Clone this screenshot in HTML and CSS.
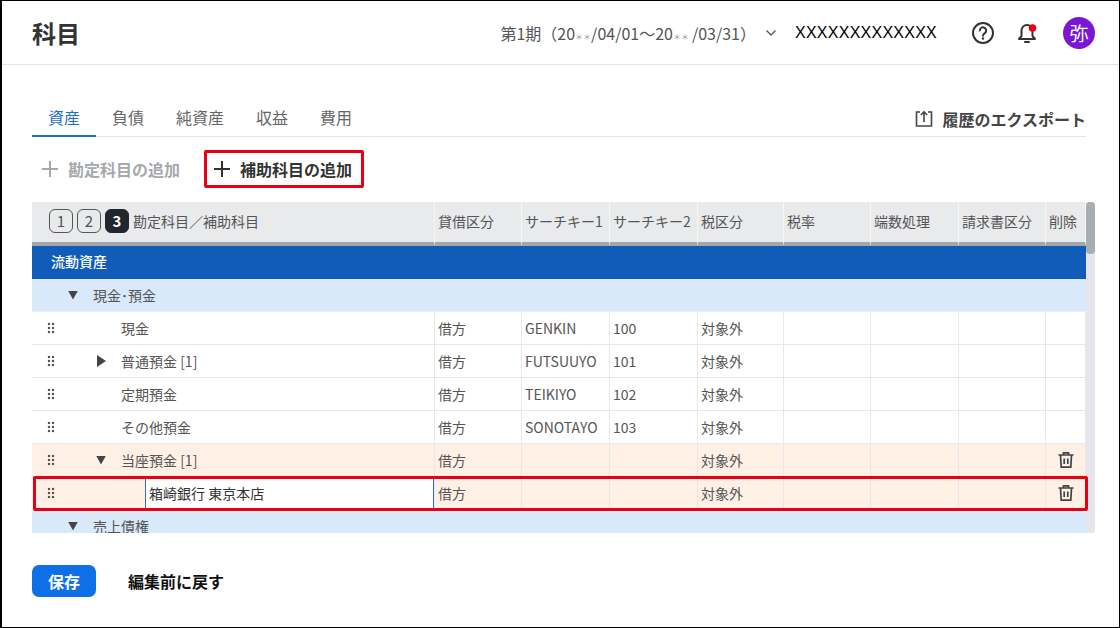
FILE: index.html
```html
<!DOCTYPE html>
<html lang="en">
  <head>
    <meta charset="utf-8" />
    <meta name="viewport" content="width=device-width, initial-scale=1" />
    <title>科目</title>
    <link rel="stylesheet" href="styles.css">
  </head>
  <body>
    <div class="page">
      <header class="topbar">
        <h1>科目</h1>
        <div class="period">第1期（20<span class="mask">＊＊</span>/04/01〜20<span class="mask gap">＊＊</span>/03/31）</div>
        <svg class="chevron" width="12" height="8" viewBox="0 0 12 8"><path d="M1.500 1.500 6 6l4.500-4.500" fill="none" stroke="#555" stroke-width="1.300"/></svg>
        <div class="company">XXXXXXXXXXXXX</div>
        <svg class="icon-help" width="24" height="24" viewBox="0 0 24 24" fill="none" stroke="#333" stroke-width="2"><circle cx="12" cy="12" r="10"/><path d="M8.800 9.500a3.200 3.200 0 1 1 4.800 2.800c-1 .6-1.600 1.200-1.600 2.400" stroke-linecap="round"/><circle cx="12" cy="17.500" r="1.200" fill="#333" stroke="none"/></svg>
        <svg class="icon-bell" width="24" height="26" viewBox="0 0 24 26" fill="none" stroke="#333" stroke-width="2"><path d="M4 19h16l-2.500-3v-5.500a5.500 5.500 0 0 0-11 0V16z" stroke-linejoin="round"/><path d="M10 22h4" stroke-linecap="round"/><circle cx="17.500" cy="8" r="3.800" fill="#e60012" stroke="none"/></svg>
        <div class="avatar">弥</div>
      </header>

      <main class="content">
        <div class="tabs">
          <div class="tab active">資産</div>
          <div class="tab">負債</div>
          <div class="tab">純資産</div>
          <div class="tab">収益</div>
          <div class="tab">費用</div>
          <div class="export">
            <svg width="20" height="20" viewBox="0 0 20 20" fill="none" stroke="#444" stroke-width="1.600"><path d="M6 3H2.500v14h15V3H14"/><path d="M10 13V3M6.800 6 10 2.800 13.200 6"/></svg>
            履歴のエクスポート
          </div>
        </div>

        <div class="actions">
          <div class="add-btn disabled"><span class="plus"></span>勘定科目の追加</div>
          <div class="add-btn marked"><span class="plus"></span>補助科目の追加</div>
        </div>

        <div class="table-wrap">
          <div class="table-scroll">
            <table class="table">
              <colgroup>
                <col class="col-name" /><col class="col-a" /><col class="col-b" /><col class="col-b" /><col class="col-c" /><col class="col-a" /><col class="col-b" /><col class="col-a" /><col />
              </colgroup>
              <thead>
                <tr>
                  <th>
                    <div class="levels">
                      <span class="level">1</span><span class="level">2</span><span class="level on">3</span>
                      <span class="level-title">勘定科目／補助科目</span>
                    </div>
                  </th>
                  <th>貸借区分</th>
                  <th>サーチキー1</th>
                  <th>サーチキー2</th>
                  <th>税区分</th>
                  <th>税率</th>
                  <th>端数処理</th>
                  <th>請求書区分</th>
                  <th>削除</th>
                </tr>
              </thead>
              <tbody>
                <tr class="row-section"><td colspan="9"><span class="section-name">流動資産</span></td></tr>
                <tr class="row-group"><td colspan="9"><div class="name lv-group"><span class="tri down"></span>現金･預金</div></td></tr>
                <tr>
                  <td><div class="name"><span class="grip"></span><span class="tri none"></span>現金</div></td>
                  <td>借方</td><td>GENKIN</td><td>100</td><td>対象外</td><td></td><td></td><td></td><td></td>
                </tr>
                <tr>
                  <td><div class="name"><span class="grip"></span><span class="tri right"></span>普通預金 [1]</div></td>
                  <td>借方</td><td>FUTSUUYO</td><td>101</td><td>対象外</td><td></td><td></td><td></td><td></td>
                </tr>
                <tr>
                  <td><div class="name"><span class="grip"></span><span class="tri none"></span>定期預金</div></td>
                  <td>借方</td><td>TEIKIYO</td><td>102</td><td>対象外</td><td></td><td></td><td></td><td></td>
                </tr>
                <tr>
                  <td><div class="name"><span class="grip"></span><span class="tri none"></span>その他預金</div></td>
                  <td>借方</td><td>SONOTAYO</td><td>103</td><td>対象外</td><td></td><td></td><td></td><td></td>
                </tr>
                <tr class="row-edit">
                  <td><div class="name"><span class="grip"></span><span class="tri down"></span>当座預金 [1]</div></td>
                  <td>借方</td><td></td><td></td><td>対象外</td><td></td><td></td><td></td>
                  <td class="cell-trash"><svg class="trash" width="18" height="18" viewBox="0 0 18 18" fill="none" stroke="#444" stroke-width="1.700"><path d="M1.500 4h15M6.500 4V1.800h5V4M3.500 4l.7 12.200h9.600L14.500 4M7.200 7.500v5.500M10.800 7.500v5.500"/></svg></td>
                </tr>
                <tr class="row-edit row-new">
                  <td><div class="name"><span class="grip"></span><div class="name-input">箱崎銀行 東京本店</div></div></td>
                  <td>借方</td><td></td><td></td><td>対象外</td><td></td><td></td><td></td>
                  <td class="cell-trash"><svg class="trash" width="18" height="18" viewBox="0 0 18 18" fill="none" stroke="#444" stroke-width="1.700"><path d="M1.500 4h15M6.500 4V1.800h5V4M3.500 4l.7 12.200h9.600L14.500 4M7.200 7.500v5.500M10.800 7.500v5.500"/></svg></td>
                </tr>
                <tr class="row-group"><td colspan="9"><div class="name lv-group"><span class="tri down"></span>売上債権</div></td></tr>
              </tbody>
            </table>
          </div>
          <div class="scrollbar"><div class="thumb"></div></div>
          <div class="row-mark"></div>
        </div>

        <div class="footer">
          <button class="save-btn">保存</button>
          <button class="reset-btn">編集前に戻す</button>
        </div>
      </main>
    </div>
  </body>
</html>
```

FILE: styles.css
```css
* {
  box-sizing: border-box;
}
html,
body {
  margin: 0;
  height: 100%;
}
body {
  font-family: "Noto Sans CJK JP", "Noto Sans", sans-serif;
  color: #444;
  background: #fff;
}
.page {
  width: 1120px;
  height: 628px;
  border: 1px solid #000;
  border-left-width: 2px;
  overflow: hidden;
}
.topbar {
  height: 64px;
  display: flex;
  align-items: center;
  padding: 0 24px 0 30px;
  border-bottom: 1px solid #e4e5e7;
}
.topbar h1 {
  margin: 0;
  font-size: 24px;
  font-weight: 700;
  color: #333;
  margin-right: auto;
}
.period {
  font-size: 16px;
  color: #555;
}
.mask {
  font-size: 8px;
  color: #999;
}
.mask.gap {
  margin-right: 3px;
}
.chevron {
  margin: 0 18px 0 9px;
}
.company {
  font-family: "Liberation Sans", sans-serif;
  font-size: 16px;
  color: #000;
  letter-spacing: 0.25px;
  margin-right: 34px;
}
.icon-help {
  margin-right: 20px;
}
.icon-bell {
  margin-right: 24px;
}
.avatar {
  width: 32px;
  height: 32px;
  border-radius: 50%;
  background: #7a16d6;
  color: #fff;
  font-size: 19px;
  line-height: 32px;
  text-align: center;
}
.content {
  padding: 36px 24px 0 30px;
}
.tabs {
  height: 36px;
  display: flex;
  border-bottom: 1px solid #e4e5e7;
  margin-right: 9px;
}
.tab {
  height: 36px;
  line-height: 33px;
  padding: 0 16px;
  font-size: 16px;
  color: #666;
}
.tab.active {
  color: #1e6fc8;
  border-bottom: 2px solid #1e6fc8;
}
.export {
  margin-left: auto;
  display: flex;
  align-items: center;
  gap: 8px;
  font-size: 16px;
  font-weight: 700;
  color: #444;
  height: 35px;
}
.actions {
  display: flex;
  align-items: center;
  height: 38px;
  margin-top: 13px;
  margin-bottom: 14px;
}
.add-btn {
  display: flex;
  align-items: center;
  height: 38px;
  font-size: 16px;
  font-weight: 700;
  color: #333;
  gap: 10px;
}
.add-btn.disabled {
  color: #a5a8ad;
  padding-left: 10px;
  width: 172px;
}
.add-btn.marked {
  width: 160px;
  padding-left: 7px;
  border: 3px solid #e60012;
  border-radius: 2px;
}
.plus {
  display: block;
  width: 16px;
  height: 16px;
  background: linear-gradient(currentColor, currentColor) center / 16px 2px no-repeat,
    linear-gradient(currentColor, currentColor) center / 2px 16px no-repeat;
}
.table-wrap {
  position: relative;
  display: flex;
  width: 1063px;
}
.table-scroll {
  width: 1054px;
  height: 331px;
  overflow: hidden;
}
.table {
  width: 100%;
  border-collapse: separate;
  border-spacing: 0;
  table-layout: fixed;
  font-size: 14px;
}
.col-name {
  width: 403px;
}
.col-a {
  width: 87px;
}
.col-b {
  width: 88px;
}
.col-c {
  width: 86px;
}
.table th {
  height: 44px;
  background: #e9eaec;
  border-right: 1px solid #f6f6f7;
  border-bottom: 4px solid #a3a7ad;
  font-weight: 400;
  font-size: 14px;
  text-align: left;
  padding: 0 0 2px 3px;
  color: #555;
  white-space: nowrap;
  overflow: hidden;
}
.table th:first-child {
  padding-left: 17px;
}
.table td {
  height: 33px;
  padding: 0 0 0 3px;
  background: #fff;
  border-right: 1px solid #e6e8ea;
  border-bottom: 1px solid #e6e8ea;
  color: #555;
  white-space: nowrap;
}
.table td:first-child {
  padding-left: 0;
}
.levels {
  display: flex;
  align-items: center;
  gap: 4px;
}
.level {
  width: 24px;
  height: 24px;
  border: 1px solid #555;
  border-radius: 6px;
  line-height: 21px;
  text-align: center;
  font-size: 15px;
  color: #555;
}
.level.on {
  background: #22262e;
  border-color: #22262e;
  color: #fff;
  font-weight: 700;
}
.table .row-section td {
  background: #115cb8;
  border: 0;
  padding-bottom: 3px;
}
.section-name {
  padding-left: 16px;
  color: #fff;
  font-weight: 500;
  font-size: 14px;
}
.table .row-section td:first-child {
  padding-left: 3px;
}
.table .row-group td {
  background: #d9e9f9;
  border: 0;
  border-bottom: 1px solid #e8f0f8;
}
.table .row-edit td {
  background: #fef0e4;
}
.name {
  display: flex;
  align-items: center;
  height: 32px;
}
.lv-group {
  padding-left: 36px;
}
.lv-group .tri {
  margin-right: 15px;
}
.grip {
  width: 8px;
  height: 12px;
  margin-left: 15px;
  margin-right: 42px;
  background: radial-gradient(circle at center, #555 1.4px, transparent 1.6px) 0 0 / 4px 4px;
  flex: none;
}
.tri {
  width: 10px;
  height: 9px;
  margin-right: 14px;
  flex: none;
}
.tri.none {
  visibility: hidden;
}
.tri.down {
  background: #444;
  clip-path: polygon(0 0, 100% 0, 50% 100%);
}
.row-edit .tri.down {
  margin-left: -1px;
  margin-right: 15px;
}
.tri.right {
  height: 12px;
  background: #444;
  clip-path: polygon(0 0, 90% 50%, 0 100%);
}
.row-new .grip {
  margin-right: 0;
}
.name-input {
  margin-left: 90px;
  width: 289px;
  height: 32px;
  line-height: 30px;
  background: #fff;
  border: 1px solid #2f6fd0;
  padding-left: 3px;
  color: #333;
}
.cell-trash {
  text-align: center;
}
.table .cell-trash {
  padding: 3px 0 0;
}
.trash {
  display: inline-block;
}
.scrollbar {
  width: 9px;
  height: 331px;
  background: #e4e6e9;
  border-radius: 2px;
}
.thumb {
  width: 9px;
  height: 52px;
  background: #a9adb3;
  border-radius: 4px;
}
.row-mark {
  position: absolute;
  left: 1px;
  top: 274px;
  width: 1055px;
  height: 35px;
  border: 3px solid #e60012;
  border-radius: 2px;
}
.footer {
  display: flex;
  align-items: center;
  margin-top: 32px;
}
.save-btn {
  width: 64px;
  height: 32px;
  border: 0;
  border-radius: 7px;
  background: #0f6fe8;
  color: #fff;
  font: 700 16px "Noto Sans CJK JP", sans-serif;
}
.reset-btn {
  margin-left: 32px;
  border: 0;
  background: none;
  padding: 0;
  color: #111;
  font: 700 16px "Noto Sans CJK JP", sans-serif;
}
```
